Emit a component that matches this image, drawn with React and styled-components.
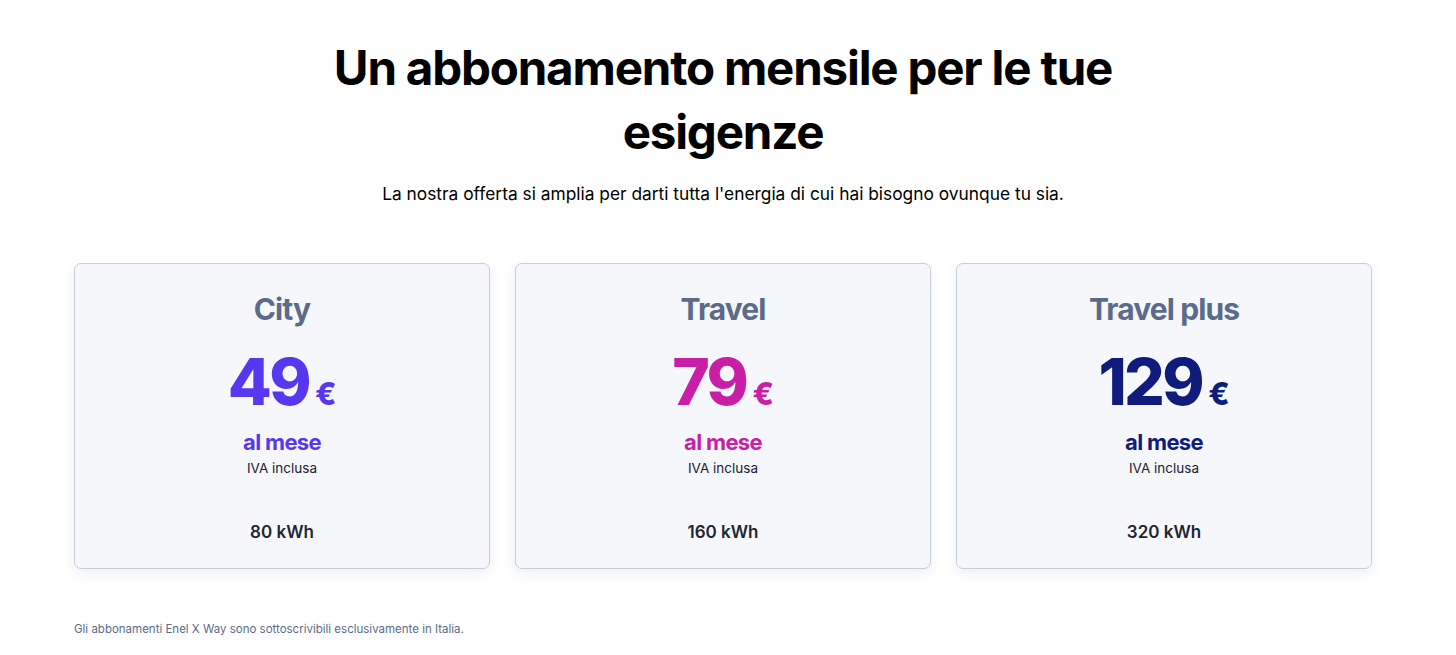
import React from "react";
import styled, { createGlobalStyle } from "styled-components";

const Global = createGlobalStyle`
  html, body { margin: 0; padding: 0; background: #ffffff; }
  body { font-family: Inter, "Noto Sans", sans-serif; color: #000; -webkit-font-smoothing: antialiased; }
`;

const Page = styled.main`
  display: flex;
  flex-direction: column;
  align-items: center;
  padding: 36px 84px 0 74px;
`;

const Title = styled.h1`
  margin: 0;
  width: 820px;
  text-align: center;
  font-size: 47.5px;
  line-height: 64px;
  font-weight: 700;
  letter-spacing: -0.025em;
  color: #000;
`;

const Subtitle = styled.p`
  margin: 18px 0 0;
  font-size: 17.35px;
  line-height: 24px;
  font-weight: 400;
  letter-spacing: 0;
  color: #000;
  text-align: center;
`;

const Cards = styled.section`
  margin-top: 57px;
  align-self: stretch;
  display: grid;
  grid-template-columns: repeat(3, 416px);
  gap: 25px;
`;

const Card = styled.article`
  height: 306px;
  box-sizing: border-box;
  background: #f6f7fb;
  border: 1px solid #c6cddb;
  border-radius: 7px;
  box-shadow: 0 4px 12px rgba(30, 40, 80, 0.08);
  display: flex;
  flex-direction: column;
  align-items: center;
  padding-top: 27px;
`;

const PlanName = styled.h2`
  margin: 0;
  font-size: 30px;
  line-height: 36px;
  font-weight: 700;
  letter-spacing: -0.03em;
  color: #5b6b89;
`;

const PriceRow = styled.div`
  margin-top: 23px;
  display: flex;
  align-items: baseline;
  gap: 6px;
  color: ${(p) => p.$color};
`;

const Amount = styled.span`
  font-size: 64px;
  line-height: 64px;
  font-weight: 800;
  letter-spacing: -0.04em;
`;

const Currency = styled.span`
  font-size: 31px;
  font-weight: 800;
`;

const Period = styled.div`
  margin-top: 14px;
  font-size: 22px;
  line-height: 28px;
  font-weight: 700;
  letter-spacing: -0.03em;
  color: ${(p) => p.$color};
`;

const Vat = styled.div`
  margin-top: 3px;
  font-size: 13.5px;
  line-height: 18px;
  font-weight: 400;
  color: #1b2230;
`;

const Energy = styled.div`
  margin-top: 44px;
  font-size: 17px;
  line-height: 22px;
  font-weight: 600;
  color: #1f2633;
`;

const Footnote = styled.p`
  align-self: flex-start;
  margin: 52px 0 0;
  font-size: 11.5px;
  line-height: 16px;
  color: #5b6b89;
`;

const plans = [
  { name: "City", price: "49", color: "#5738ef", kwh: "80 kWh" },
  { name: "Travel", price: "79", color: "#c81fa6", kwh: "160 kWh" },
  { name: "Travel plus", price: "129", color: "#101c7c", kwh: "320 kWh" },
];

export default function App() {
  return (
    <>
      <Global />
      <Page>
        <Title>Un abbonamento mensile per le tue esigenze</Title>
        <Subtitle>
          La nostra offerta si amplia per darti tutta l'energia di cui hai bisogno ovunque tu sia.
        </Subtitle>
        <Cards>
          {plans.map((p) => (
            <Card key={p.name}>
              <PlanName>{p.name}</PlanName>
              <PriceRow $color={p.color}>
                <Amount>{p.price}</Amount>
                <Currency>€</Currency>
              </PriceRow>
              <Period $color={p.color}>al mese</Period>
              <Vat>IVA inclusa</Vat>
              <Energy>{p.kwh}</Energy>
            </Card>
          ))}
        </Cards>
        <Footnote>Gli abbonamenti Enel X Way sono sottoscrivibili esclusivamente in Italia.</Footnote>
      </Page>
    </>
  );
}
